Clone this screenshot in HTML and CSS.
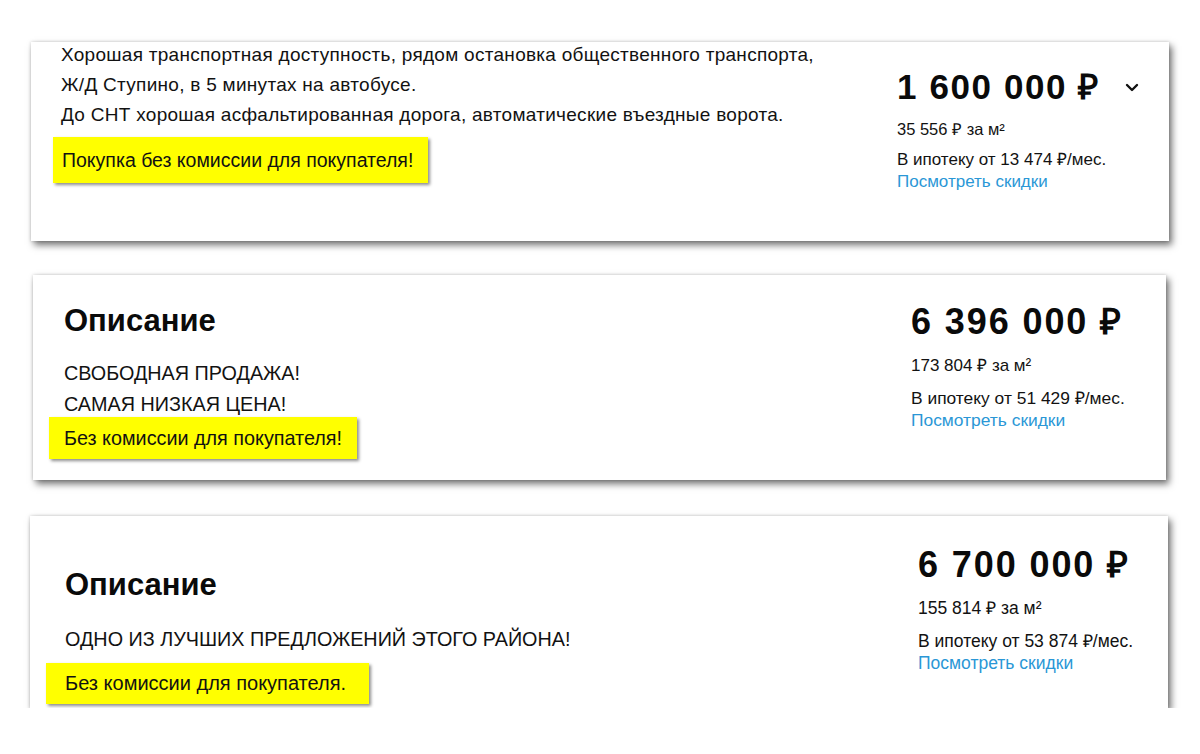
FILE: index.html
```html
<!DOCTYPE html>
<html lang="ru">
<head>
    <meta charset="UTF-8">
    <meta name="viewport" content="width=device-width, initial-scale=1.0">
    <title>Объявления</title>
    <link rel="stylesheet" href="styles.css">
</head>
<body>
    <main class="feed">
        <!-- first offer, cropped at the top -->
        <article class="offer offer--first">
            <div class="offer-desc">
                <p class="offer-text">Хорошая транспортная доступность, рядом остановка общественного транспорта,<br>Ж/Д Ступино, в 5 минутах на автобусе.<br>До СНТ хорошая асфальтированная дорога, автоматические въездные ворота.</p>
                <div class="promo">Покупка без комиссии для покупателя!</div>
            </div>
            <div class="offer-price">
                <div class="price-row">
                    <span class="price">1 600 000 ₽</span>
                    <svg class="chevron" width="14" height="9" viewBox="0 0 14 9" fill="none" stroke="#111" stroke-width="2.4" stroke-linecap="round" stroke-linejoin="round"><path d="M2 2l5 5 5-5"/></svg>
                </div>
                <div class="price-sqm">35 556 ₽ за м²</div>
                <div class="mortgage">В ипотеку от 13 474 ₽/мес.</div>
                <a class="discounts" href="#">Посмотреть скидки</a>
            </div>
        </article>

        <article class="offer offer--second">
            <div class="offer-desc">
                <h2 class="offer-title">Описание</h2>
                <p class="offer-text">СВОБОДНАЯ ПРОДАЖА!<br>САМАЯ НИЗКАЯ ЦЕНА!</p>
                <div class="promo">Без комиссии для покупателя!</div>
            </div>
            <div class="offer-price">
                <div class="price-row"><span class="price">6 396 000 ₽</span></div>
                <div class="price-sqm">173 804 ₽ за м²</div>
                <div class="mortgage">В ипотеку от 51 429 ₽/мес.</div>
                <a class="discounts" href="#">Посмотреть скидки</a>
            </div>
        </article>

        <article class="offer offer--third">
            <div class="offer-desc">
                <h2 class="offer-title">Описание</h2>
                <p class="offer-text">ОДНО ИЗ ЛУЧШИХ ПРЕДЛОЖЕНИЙ ЭТОГО РАЙОНА!</p>
                <div class="promo">Без комиссии для покупателя.</div>
            </div>
            <div class="offer-price">
                <div class="price-row"><span class="price">6 700 000 ₽</span></div>
                <div class="price-sqm">155 814 ₽ за м²</div>
                <div class="mortgage">В ипотеку от 53 874 ₽/мес.</div>
                <a class="discounts" href="#">Посмотреть скидки</a>
            </div>
        </article>
    </main>
</body>
</html>
```

FILE: styles.css
```css
body {
    margin: 0;
    background-color: #ffffff;
    font-family: "Liberation Sans", Arial, sans-serif;
    color: #121212;
}

.feed {
    display: flex;
    flex-direction: column;
    align-items: flex-start;
    padding-top: 42px;
}

.offer {
    display: flex;
    justify-content: space-between;
    align-items: flex-start;
    background-color: #ffffff;
    box-shadow: 3px 4px 7px rgba(0, 0, 0, 0.55), 0 0 3px rgba(0, 0, 0, 0.18);
    box-sizing: border-box;
}

.offer-text {
    margin: 0;
    font-size: 19px;
    letter-spacing: 0.28px;
    line-height: 30px;
}

.offer-title {
    margin: 0;
    font-size: 31px;
    line-height: 36px;
    font-weight: 700;
    color: #0a0a0a;
}

/* yellow stripe under the description */
.promo {
    display: inline-block;
    background-color: #ffff00;
    font-size: 19.5px;
    box-shadow: 2px 2px 3px rgba(0, 0, 0, 0.45);
}

.offer-price {
    box-sizing: border-box;
}

.price-row {
    display: flex;
    align-items: center;
}

.price {
    font-size: 35px;
    letter-spacing: 1.6px;
    line-height: 40px;
    font-weight: 700;
    color: #0a0a0a;
}

.chevron {
    margin-left: 25px;
}

.price-sqm {
    font-size: 16.5px;
    line-height: 20px;
}

.mortgage {
    font-size: 17px;
    line-height: 22px;
}

.discounts {
    display: block;
    font-size: 17px;
    line-height: 22px;
    color: #2a97d6;
    text-decoration: none;
}

/* first card */
.offer--first {
    margin-left: 31px;
    width: 1138px;
    height: 199px;
}

.offer--first .offer-desc {
    padding-left: 30px;
    margin-top: -2px;
}

.offer--first .promo {
    margin-top: 7px;
    margin-left: -8px;
    padding: 0 15px 0 9px;
    line-height: 46px;
}

.offer--first .offer-price {
    width: 272px;
    padding-top: 25px;
}

.offer--first .price-sqm {
    margin-top: 12px;
}

.offer--first .mortgage {
    margin-top: 10px;
}

/* second card */
.offer--second {
    margin-top: 34px;
    margin-left: 33px;
    width: 1133px;
    height: 205px;
}

.offer--second .offer-desc {
    padding: 28px 0 0 31px;
}

.offer--second .offer-title {
    margin-bottom: 19px;
}

.offer--second .offer-text {
    line-height: 31px;
    font-size: 19.8px;
    letter-spacing: 0;
}

.offer--second .promo {
    margin-top: -3px;
    margin-left: -15px;
    padding: 0 15px;
    line-height: 42px;
    font-size: 19.8px;
}

.offer--second .offer-price {
    width: 255px;
    padding-top: 27px;
}

.offer--second .price {
    font-size: 36px;
    letter-spacing: 1.9px;
}

.offer--second .price-sqm {
    margin-top: 14px;
    font-size: 17px;
}

.offer--second .mortgage,
.offer--second .discounts {
    font-size: 17.4px;
}

.offer--second .mortgage {
    margin-top: 11px;
}

/* third card */
.offer--third {
    margin-top: 36px;
    margin-left: 30px;
    width: 1138px;
    height: 192px;
}

.offer--third .offer-desc {
    padding: 51px 0 0 35px;
}

.offer--third .offer-title {
    margin-bottom: 21px;
}

.offer--third .offer-text {
    line-height: 31px;
    font-size: 19.8px;
    letter-spacing: 0;
}

.offer--third .promo {
    margin-top: 8px;
    margin-left: -19px;
    padding: 0 23px 0 19px;
    line-height: 41px;
    font-size: 20px;
}

.offer--third .offer-price {
    width: 250px;
    padding-top: 29px;
}

.offer--third .price {
    font-size: 36px;
    letter-spacing: 1.9px;
}

.offer--third .price-sqm {
    margin-top: 13px;
    font-size: 17.5px;
}

.offer--third .mortgage,
.offer--third .discounts {
    font-size: 17.5px;
}

.offer--third .mortgage {
    margin-top: 12px;
}
```
